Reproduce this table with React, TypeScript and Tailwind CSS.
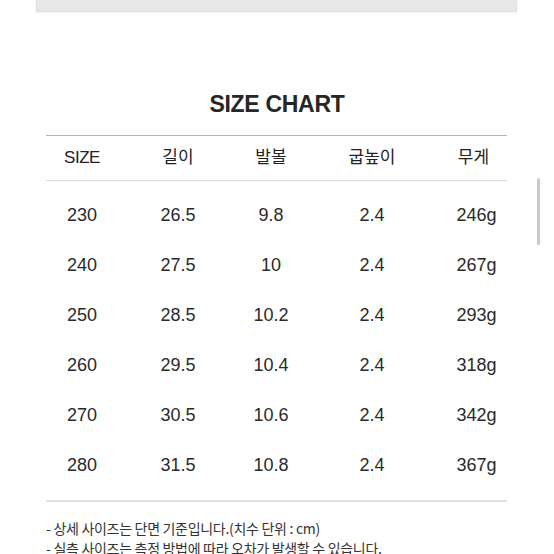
import React from "react";

const rows = [
  ["230", "26.5", "9.8", "2.4", "246g"],
  ["240", "27.5", "10", "2.4", "267g"],
  ["250", "28.5", "10.2", "2.4", "293g"],
  ["260", "29.5", "10.4", "2.4", "318g"],
  ["270", "30.5", "10.6", "2.4", "342g"],
  ["280", "31.5", "10.8", "2.4", "367g"],
];

const font = { fontFamily: '"Liberation Sans", "Noto Sans CJK KR", sans-serif' };

export default function App() {
  return (
    <div className="relative w-[554px] h-[554px] overflow-hidden bg-white text-[#222]" style={font}>
      <div className="ml-[36px] w-[481px] h-[12px] bg-[#e8e8e8] border-x border-b border-[#e0e0e0] shadow-[0_1px_2px_rgba(0,0,0,0.06)]" />
      <h1 className="mt-[77px] text-center text-[23px] leading-[30px] font-bold tracking-[-0.3px] text-[#262626]">
        SIZE CHART
      </h1>
      <div className="mt-[16px] ml-[46px] w-[461px]">
        <div className="h-px bg-[#b4b4b4]" />
        <div className="grid grid-cols-[72px_120px_66px_136px_67px] h-[44px] items-center text-center text-[17px]">
          <div className="tracking-[-0.5px]">SIZE</div>
          <div>길이</div>
          <div>발볼</div>
          <div>굽높이</div>
          <div>무게</div>
        </div>
        <div className="h-px bg-[#dcdcdc]" />
        <div className="pt-[9px] pb-[10px]">
          {rows.map((r) => (
            <div key={r[0]} className="grid grid-cols-[72px_120px_66px_136px_67px] h-[50px] items-center text-center text-[18px] text-[#2a2a2a]">
              {r.map((c, i) => (
                <div key={i} className={i === 4 ? "pl-[6px]" : ""}>{c}</div>
              ))}
            </div>
          ))}
        </div>
        <div className="h-[2px] bg-[#e2e2e2]" />
      </div>
      <div className="mt-[16px] ml-[46px] text-[14px] leading-[20px] text-[#333] tracking-[-0.3px] whitespace-nowrap" style={{ fontFamily: '"Noto Sans CJK KR", sans-serif' }}>
        <p>- 상세 사이즈는 단면 기준입니다.(치수 단위 : cm)</p>
        <p>- 실측 사이즈는 측정 방법에 따라 오차가 발생할 수 있습니다.</p>
      </div>
      <div className="absolute left-[537px] top-[178px] w-[3px] h-[67px] rounded-full bg-[#cbcbcb]" />
    </div>
  );
}
